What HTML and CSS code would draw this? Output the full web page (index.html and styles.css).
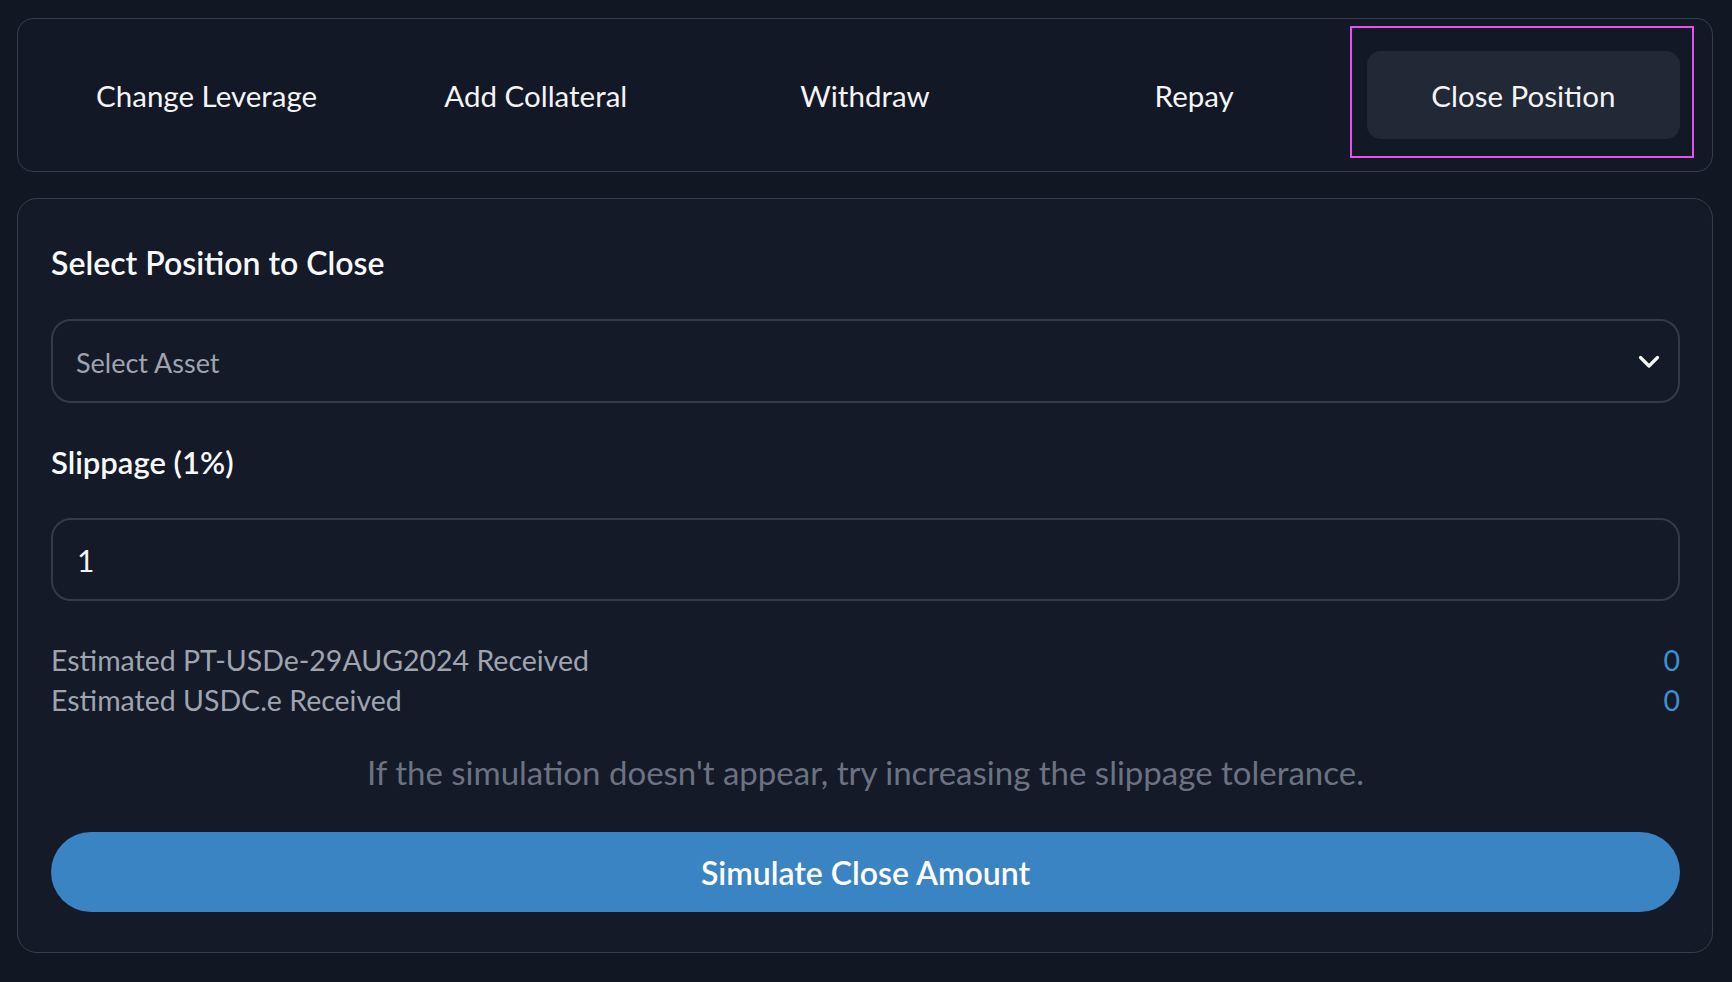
FILE: index.html
```html
<!DOCTYPE html>
<html lang="en">
<head>
<meta charset="utf-8">
<title>Close Position</title>
<link rel="stylesheet" href="styles.css">
</head>
<body>
<div class="page">
  <nav class="tabs-card">
    <div class="tabs">
      <button class="tab">Change Leverage</button>
      <button class="tab">Add Collateral</button>
      <button class="tab">Withdraw</button>
      <button class="tab">Repay</button>
      <button class="tab tab-active">Close Position<span class="focus-ring"></span></button>
    </div>
  </nav>

  <section class="form-card">
    <h2 class="label title">Select Position to Close</h2>
    <div class="select">
      <span class="select-placeholder">Select Asset</span>
      <svg class="chevron" width="22" height="14" viewBox="0 0 22 14" aria-hidden="true">
        <polyline points="2.5,2.5 11,11 19.5,2.5" fill="none" stroke="#f4f5f0" stroke-width="3.2" stroke-linecap="round" stroke-linejoin="round"/>
      </svg>
    </div>

    <h2 class="label slippage">Slippage (1%)</h2>
    <div class="input"><span class="input-value">1</span></div>

    <div class="estimates">
      <div class="est-row"><span>Estimated PT-USDe-29AUG2024 Received</span><span class="est-value">0</span></div>
      <div class="est-row"><span>Estimated USDC.e Received</span><span class="est-value">0</span></div>
    </div>

    <p class="hint">If the simulation doesn't appear, try increasing the slippage tolerance.</p>

    <button class="primary">Simulate Close Amount</button>
  </section>
</div>
</body>
</html>
```

FILE: styles.css
```css
* { box-sizing: border-box; }

html, body {
  margin: 0;
  padding: 0;
  background: #121724;
}

body {
  font-family: Lato, "Noto Sans", sans-serif;
  color: #f3f4f6;
}

.page {
  padding: 18px 19px 0 17px;
  display: flex;
  flex-direction: column;
  gap: 26px;
}

.tabs-card {
  border: 1px solid #363e4e;
  border-radius: 16px;
  background: #131826;
  padding: 32px;
}

.tabs {
  display: grid;
  grid-template-columns: repeat(5, 1fr);
  gap: 16px;
}

.tab {
  position: relative;
  height: 88px;
  border: 0;
  border-radius: 14px;
  background: transparent;
  color: #f3f4f6;
  font-family: inherit;
  font-size: 29.5px;
  font-weight: 400;
  cursor: pointer;
}

.tab-active {
  background: #212836;
}

.focus-ring {
  position: absolute;
  left: -17px;
  right: -14px;
  top: -25px;
  bottom: -19px;
  border: 2px solid #e94fea;
  pointer-events: none;
}

.form-card {
  border: 1px solid #363e4e;
  border-radius: 20px;
  background: #141a28;
  padding: 44px 32px 40px 33px;
  display: flex;
  flex-direction: column;
}

.label {
  margin: 0;
  font-size: 32px;
  font-weight: 600;
  line-height: 40px;
  color: #f7f8fa;
}

.slippage { font-size: 31px; }

.select {
  margin-top: 36px;
  height: 84px;
  border: 2px solid #333b4b;
  border-radius: 20px;
  display: flex;
  align-items: center;
  justify-content: space-between;
  padding: 2px 18px 0 23px;
}

.select-placeholder {
  font-size: 27px;
  color: #9ea4ae;
}

.chevron { display: block; }

.slippage { margin-top: 39px; }

.input {
  margin-top: 36px;
  height: 83px;
  border: 2px solid #333b4b;
  border-radius: 20px;
  display: flex;
  align-items: center;
  padding: 0 24px 0 24px;
}

.input-value {
  font-size: 30px;
  color: #f3f4f6;
}

.estimates {
  margin-top: 39px;
  display: flex;
  flex-direction: column;
}

.est-row {
  display: flex;
  justify-content: space-between;
  font-size: 28.5px;
  line-height: 40px;
  color: #9ea4b0;
}

.est-value {
  color: #3d8fd3;
}

.hint {
  margin: 32px 0 0;
  text-align: center;
  font-size: 33px;
  line-height: 40px;
  color: #6b7282;
}

.primary {
  margin-top: 40px;
  height: 80px;
  border: 0;
  border-radius: 40px;
  background: #3a84c4;
  color: #ffffff;
  font-family: inherit;
  font-size: 32px;
  font-weight: 600;
  cursor: pointer;
}
```
